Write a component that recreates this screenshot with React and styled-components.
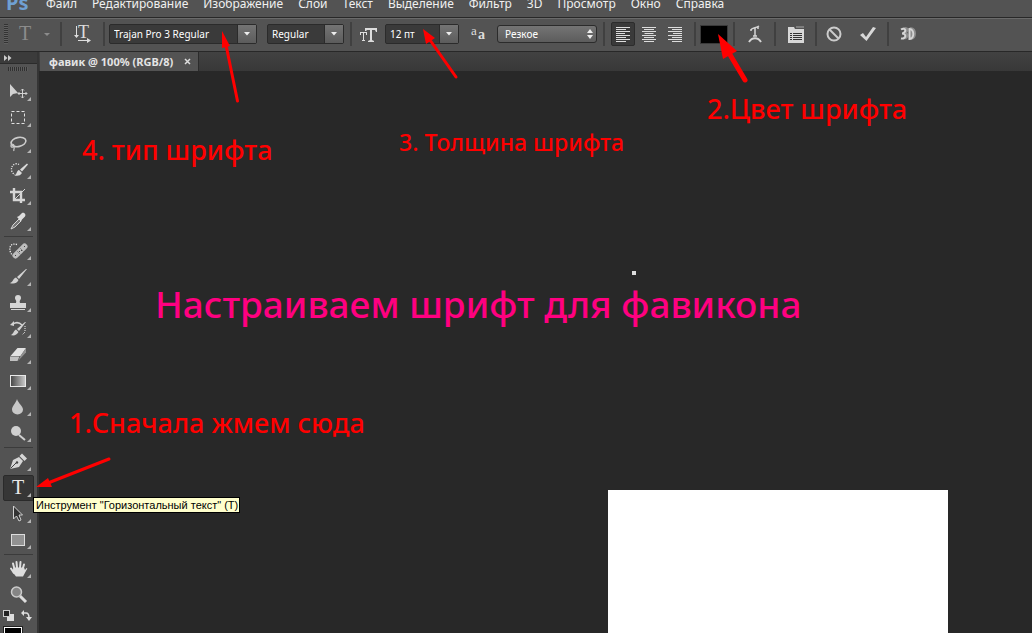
import React from "react";
import styled, { createGlobalStyle, css } from "styled-components";

const GlobalStyle = createGlobalStyle`
  *, *::before, *::after {
    box-sizing: border-box;
  }
  body {
    margin: 0;
    background: #282828;
    font-family: "Noto Sans", "Open Sans", sans-serif;
  }
  button, input, select {
    font-family: inherit;
  }
`;

const Page = styled.div`
  position: relative;
  display: flex;
  flex-direction: column;
  height: 100vh;
  min-width: 940px;
  overflow: hidden;
`;

/* ---------- menu ---------- */
const MenuBar = styled.nav`
  display: flex;
  align-items: flex-end;
  flex: none;
  height: 18px;
  padding-left: 6px;
  background: #535353;
  border-bottom: 1px solid #282828;
  overflow: hidden;
`;
const Logo = styled.span`
  width: 40px;
  padding-bottom: 4px;
  color: #6fa0d2;
  font-size: 20px;
  font-weight: bold;
  line-height: 20px;
`;
const MenuItem = styled.a`
  padding-bottom: 5px;
  margin-right: 15px;
  color: #f0f0f0;
  font-size: 12px;
  line-height: 16px;
  text-decoration: none;
  white-space: nowrap;
`;

/* ---------- options bar ---------- */
const OptionsBar = styled.div`
  display: flex;
  align-items: center;
  flex: none;
  height: 34px;
  padding: 0 0 2px 4px;
  background: #535353;
  border-top: 1px solid #6a6a6a;
  border-bottom: 1px solid #282828;
`;
const Grip = styled.span`
  width: 4px;
  height: 20px;
  background: repeating-linear-gradient(#333 0 1px, #606060 1px 2px);
`;
const Group = styled.div`
  display: flex;
  align-items: center;
  gap: ${({ $gap }) => $gap || 0}px;
  height: 24px;
  padding: 0 ${({ $right }) => $right || 0}px 0 ${({ $left }) => $left || 0}px;
  border-right: 2px solid #404040;

  &:last-child {
    border-right: none;
  }
`;
const IconButton = styled.button`
  display: flex;
  align-items: center;
  justify-content: center;
  width: ${({ $width }) => $width || 24}px;
  height: 24px;
  padding: 0;
  background: none;
  border: 1px solid transparent;
  border-radius: 2px;
  color: #d6d6d6;

  ${({ $active }) =>
    $active &&
    css`
      background: #3a3a3a;
      border-color: #2c2c2c;
    `}
`;
const FieldIcon = styled.label`
  display: flex;
  align-items: center;
  justify-content: center;
  width: ${({ $width }) => $width}px;
  color: #d6d6d6;
`;
const Combo = styled.div`
  display: flex;
  width: ${({ $width }) => $width}px;
  height: 20px;
  border: 1px solid #2b2b2b;
  border-radius: 2px;
  background: #3a3a3a;
`;
const ComboInput = styled.input`
  flex: 1;
  min-width: 0;
  padding: 0 0 0 4px;
  background: none;
  border: none;
  color: #fff;
  font-size: 10px;
`;
const ComboButton = styled.button`
  display: flex;
  align-items: center;
  justify-content: center;
  width: 19px;
  padding: 0;
  background: linear-gradient(#747474, #5c5c5c);
  border: none;
  border-left: 1px solid #2b2b2b;
`;
const SelectBox = styled.div`
  position: relative;
  width: 100px;
  height: 18px;

  svg {
    position: absolute;
    top: 4px;
    right: 4px;
    pointer-events: none;
  }
`;
const Select = styled.select`
  appearance: none;
  display: block;
  width: 100%;
  height: 18px;
  padding: 0 0 0 7px;
  background: linear-gradient(#747474, #5c5c5c);
  border: 1px solid #2b2b2b;
  border-radius: 3px;
  color: #fff;
  font-size: 10px;
`;
const ColorButton = styled.button`
  width: 28px;
  height: 19px;
  padding: 0;
  background: #000;
  border: 1px solid #3a3a3a;
`;

/* ---------- body ---------- */
const Body = styled.div`
  display: flex;
  flex: 1;
  min-height: 0;
`;
const ToolColumn = styled.aside`
  flex: none;
  width: 39px;
  background: #535353;
  border-right: 2px solid #353535;
  overflow: hidden;
`;
const ColumnHead = styled.button`
  display: flex;
  align-items: center;
  width: 100%;
  height: 12px;
  padding: 0 0 0 4px;
  background: #3b3b3b;
  border: none;
  border-bottom: 1px solid #2b2b2b;
`;
const ColumnGrip = styled.div`
  width: 20px;
  height: 4px;
  margin: 3px 0 8px 8px;
  background: repeating-linear-gradient(90deg, #303030 0 1px, #5c5c5c 1px 2px);
`;
const ToolGroup = styled.div`
  padding-left: 3px;

  & + & {
    margin-top: 1px;
    padding-top: 2px;
    background: linear-gradient(#3b3b3b, #3b3b3b) 4px 0 / 29px 1px no-repeat;
  }
`;
const ToolButton = styled.button`
  display: block;
  width: 31px;
  height: 26px;
  padding: 0;
  background: none;
  border: 1px solid transparent;
  border-radius: 2px;

  ${({ $active }) =>
    $active &&
    css`
      background: #363636;
      border-color: #2a2a2a;
    `}

  svg {
    display: block;
  }
`;
const ColorRow = styled.div`
  display: flex;
  gap: 7px;
  padding: 2px 0 6px 3px;
`;
const Mini = styled.button`
  width: 11px;
  height: 11px;
  padding: 0;
  background: none;
  border: none;

  svg {
    display: block;
  }
`;
const Foreground = styled.button`
  display: block;
  width: 18px;
  height: 18px;
  margin-left: 4px;
  background: #000;
  border: 1px solid #fff;
  outline: 1px solid #222;
`;

const Workspace = styled.main`
  display: flex;
  flex-direction: column;
  flex: 1;
  min-width: 0;
`;
const TabStrip = styled.div`
  display: flex;
  flex: none;
  height: 19px;
  padding-left: 1px;
  background: linear-gradient(#424242, #383838);
`;
const Tab = styled.div`
  display: flex;
  align-items: center;
  gap: 11px;
  padding: 0 6px 0 9px;
  background: #535353;
  border-right: 1px solid #2b2b2b;
  color: #e4e4e4;
  font-size: 11px;
  font-weight: bold;
  white-space: nowrap;
`;
const Close = styled.button`
  width: 8px;
  height: 8px;
  padding: 0;
  background: none;
  border: none;

  svg {
    display: block;
  }
`;
const Canvas = styled.div`
  flex: 1;
  background: #282828;
`;

/* everything below floats over the working area */
const Sheet = styled.div`
  position: absolute;
  top: 490px;
  bottom: 0;
  left: 608px;
  width: 340px;
  background: #fff;
`;
const Dot = styled.span`
  position: absolute;
  top: 271px;
  left: 632px;
  width: 4px;
  height: 4px;
  background: #ddd;
`;
const Note = styled.p`
  position: absolute;
  top: ${({ $top }) => $top}px;
  left: ${({ $left }) => $left}px;
  margin: 0;
  color: ${({ $color }) => $color || "#f00"};
  font-size: ${({ $size }) => $size || 27}px;
  font-weight: 500;
  line-height: 1;
  white-space: nowrap;
`;
const Tooltip = styled.div`
  position: absolute;
  top: 497px;
  left: 33px;
  padding: 0 1px 0 2px;
  background: #ffffcd;
  border: 1px solid #000;
  color: #000;
  font-family: "Liberation Sans", sans-serif;
  font-size: 11px;
  line-height: 14px;
  white-space: nowrap;
`;
const Arrows = styled.svg`
  position: absolute;
  top: 0;
  left: 0;
  pointer-events: none;
`;

const Down = () => (
  <svg width="6" height="4" viewBox="0 0 6 4">
    <path d="M0 0h6L3 3.5z" fill="#eee" />
  </svg>
);

const serif = '"Liberation Serif", serif';

const ComboBox = ({ id, label, value, width }) => (
  <Combo $width={width}>
    <ComboInput id={id} aria-label={label} defaultValue={value} />
    <ComboButton aria-label={label}>
      <Down />
    </ComboButton>
  </Combo>
);

const AlignIcon = ({ kind }) => {
  const widths = [14, 10, 14, 9, 14, 10, 14, 10];
  const start = { left: () => 0, center: w => (14 - w) / 2, right: w => 14 - w };
  return (
    <svg width="14" height="15" viewBox="0 0 14 15" fill="#ddd">
      {widths.map((w, i) => (
        <rect key={i} x={start[kind](w)} y={i * 2} width={w} height="1" />
      ))}
    </svg>
  );
};

// tool drawings share a 29x24 box, the icon itself is centred on 14,12
const tools = {
  move: (
    <>
      <path d="M6 4v13l3-3 5-1z" fill="#d2d2d2" />
      <path
        d="M18.500 9v9M14 13.500h9M17 10.500L18.500 9l1.500 1.500M17 16.500l1.500 1.500 1.500-1.500M15.500 12L14 13.500l1.500 1.500M21.500 12l1.500 1.500-1.500 1.500"
        stroke="#d2d2d2"
        fill="none"
      />
    </>
  ),
  marquee: (
    <rect x="7.500" y="5.500" width="13" height="12" fill="none" stroke="#e0e0e0" strokeDasharray="3 2" />
  ),
  lasso: (
    <>
      <ellipse cx="14.500" cy="10" rx="7.500" ry="4.500" transform="rotate(-12 14.500 10)" fill="none" stroke="#ccc" strokeWidth="1.600" />
      <path d="M8 12c-2 1-1 4 1 3s1-3-1-3M10 15c1 2-1 2 0 4" fill="none" stroke="#ccc" strokeWidth="1.200" />
    </>
  ),
  quick: (
    <>
      <path d="M15 6.500a5 5.500 0 1 0-4 10" fill="none" stroke="#e8e8e8" strokeWidth="1.300" strokeDasharray="1.200 1.200" />
      <path d="M24 6.500l-6 7-2-2 7-6zM15 12l3 3c-2 3-4 3-8 2.500 3-.5 2.500-5 5-5.500z" fill="#dadada" />
    </>
  ),
  crop: (
    <>
      <path d="M10 4v12h11M6 8h11v11" fill="none" stroke="#d6d6d6" strokeWidth="2.400" />
      <path d="M11 15l10-10" stroke="#d6d6d6" />
    </>
  ),
  dropper: (
    <>
      <path d="M7 19l2-4 6-6 2 2-6 6z" fill="#777" stroke="#d6d6d6" />
      <path d="M13 7l2-1 3-3c2-1 4.500 1.500 3 3.500l-3 3-1 2z" fill="#ddd" />
    </>
  ),
  heal: (
    <>
      <path d="M13 5.500C4 3 5 13 8 15.500" fill="none" stroke="#eee" strokeWidth="1.300" strokeDasharray="1.200 1.200" />
      <path d="M11.500 16.500l9-9" stroke="#bdbdbd" strokeWidth="6" strokeLinecap="round" />
      <path d="M13 12l4 4M16 9l4 4" stroke="#888" />
      <path d="M15 12.500h1M17 11.500h1M11 16.500h1M20 7.500h1" stroke="#444" />
    </>
  ),
  brush: (
    <path d="M23 4l-8 10-2-2 9-8zM12 12.500l2.500 2.500c-2 4-5 4-9 3 4-.5 3-4.500 6.500-5.500z" fill="#d2d2d2" />
  ),
  stamp: (
    <path d="M14 4a3 3 0 0 1 3 3c0 2-2 2-1 5h6v5H6v-5h6c1-3-1-3-1-5a3 3 0 0 1 3-3zM7 18h14v1H7z" fill="#d6d6d6" />
  ),
  history: (
    <>
      <path d="M22 5l-7 9-2-2 8-7zM12 12.500l2.500 2.500c-2 3-4 4-8 3 3-.5 3-4.500 5.500-5.500z" fill="#d2d2d2" />
      <path d="M9 7c3-2 6-2 9 1" fill="none" stroke="#d2d2d2" strokeWidth="1.500" />
      <path d="M6 8l4-4v5z" fill="#d2d2d2" />
      <path d="M21 9v6l-3 3" fill="none" stroke="#eee" strokeDasharray="1 1" />
    </>
  ),
  eraser: (
    <>
      <path d="M6.500 13l7-8H22l-5.500 8z" fill="#e2e2e2" />
      <path d="M6 13.500h9.500L13.500 18H6z" fill="#c0c0c0" />
      <path d="M16.500 13l5.500-8v4.500l-8 8.500z" fill="#919191" />
    </>
  ),
  gradient: (
    <>
      <defs>
        <linearGradient id="toolFill">
          <stop stopColor="#444" />
          <stop offset="1" stopColor="#ccc" />
        </linearGradient>
      </defs>
      <rect x="6.500" y="6.500" width="15" height="11" fill="url(#toolFill)" stroke="#e8e8e8" />
    </>
  ),
  blur: <path d="M13 4c1 4 6 7 6 10.500a5.500 5 0 0 1-11 0C8 11 12 8 13 4z" fill="#c8c8c8" />,
  dodge: (
    <>
      <circle cx="12" cy="10" r="5" fill="#d0d0d0" />
      <path d="M15 14l6 5" stroke="#d0d0d0" strokeWidth="2" />
    </>
  ),
  pen: (
    <>
      <path d="M6 19l3-9 6-3 4 4-4 6z" fill="#d6d6d6" />
      <path d="M15.500 6l2.500-2.500 5 5L20.500 11z" fill="#d6d6d6" />
      <path d="M6.500 18.500l6-6" stroke="#444" />
      <circle cx="13" cy="12.500" r="1.200" fill="#444" />
    </>
  ),
  type: (
    <text x="14" y="18" textAnchor="middle" fontSize="20" fontFamily={serif} fill="#e8e8e8">
      T
    </text>
  ),
  select: (
    <path d="M9.500 4v13l3-3 2.500 5 2-1-2-5h3.500z" fill="#333" stroke="#d2d2d2" />
  ),
  shape: <rect x="7.500" y="6.500" width="13" height="11" fill="#929292" stroke="#ddd" />,
  hand: (
    <>
      <path d="M10.500 12L9 6.500M13 11l-.5-6M16 11l.5-6M18.500 12.500l1.500-5M10 16l-3-4.500" stroke="#ddd" strokeWidth="2" strokeLinecap="round" />
      <path d="M9.500 10.500h10.500l1 2.500 1.500-2c1 .2 1 1 0 2L19 19.500h-7L8.500 15z" fill="#ddd" />
    </>
  ),
  zoom: (
    <>
      <path d="M16 13l6 6" stroke="#ddd" strokeWidth="3" />
      <circle cx="12.500" cy="9" r="5" fill="#858585" stroke="#ccc" strokeWidth="1.500" />
    </>
  )
};

const groups = [
  [
    ["move", "Перемещение"],
    ["marquee", "Прямоугольная область"],
    ["lasso", "Лассо"],
    ["quick", "Быстрое выделение"],
    ["crop", "Рамка"],
    ["dropper", "Пипетка"]
  ],
  [
    ["heal", "Точечная восстанавливающая кисть"],
    ["brush", "Кисть"],
    ["stamp", "Штамп"],
    ["history", "Архивная кисть"],
    ["eraser", "Ластик"],
    ["gradient", "Градиент"],
    ["blur", "Размытие"],
    ["dodge", "Осветлитель"]
  ],
  [
    ["pen", "Перо"],
    ["type", "Горизонтальный текст"],
    ["select", "Выделение контура"],
    ["shape", "Прямоугольник"]
  ],
  [
    ["hand", "Рука"],
    ["zoom", "Масштаб"]
  ]
];

const menu = [
  "Файл",
  "Редактирование",
  "Изображение",
  "Слои",
  "Текст",
  "Выделение",
  "Фильтр",
  "3D",
  "Просмотр",
  "Окно",
  "Справка"
];

const Options = () => (
  <OptionsBar>
    <Grip />
    <Group>
      <IconButton $width={52} aria-label="Наборы параметров">
        <svg width="32" height="20" viewBox="0 0 32 20" fill="#8c8c8c">
          <text x="1" y="16" fontSize="20" fontFamily={serif}>
            T
          </text>
          <path d="M26 9h6l-3 3z" />
        </svg>
      </IconButton>
    </Group>
    <Group>
      <IconButton $width={41} aria-label="Ориентация текста">
        <svg width="18" height="18" viewBox="0 0 18 18" fill="#ddd">
          <text x="4" y="13" fontSize="18" fontFamily={serif}>
            T
          </text>
          <path d="M2 1h1v9h2l-2.500 3L0 10h2zM4 15h9v-2l4 2.500-4 2.500v-2H4z" />
        </svg>
      </IconButton>
    </Group>
    <Group $left={4} $right={6} $gap={10}>
      <ComboBox id="family" label="Шрифт" value="Trajan Pro 3 Regular" width={148} />
      <ComboBox id="face" label="Начертание" value="Regular" width={77} />
    </Group>
    <Group $right={6}>
      <FieldIcon $width={33} htmlFor="size" aria-label="Кегль">
        <svg width="18" height="17" viewBox="0 0 18 17" fill="#ddd">
          <path d="M0 6h7v3H6V7H4v7h1v1H2v-1h1V7H1v2H0z" />
          <path d="M5 2h12v4h-1l-1-2h-3v10l2 1v1H8v-1l2-1V4H7L6 5H5z" />
        </svg>
      </FieldIcon>
      <ComboBox id="size" label="Кегль" value="12 пт" width={74} />
      <FieldIcon $width={38} htmlFor="smooth" aria-label="Сглаживание">
        <svg width="16" height="14" viewBox="0 0 16 14" fill="#ddd">
          <text x="1" y="8" fontSize="13" fontFamily={serif}>
            a
          </text>
          <text x="8" y="12" fontSize="14" fontWeight="bold" fontFamily={serif}>
            a
          </text>
        </svg>
      </FieldIcon>
      <SelectBox>
        <Select id="smooth" defaultValue="Резкое">
          <option>Резкое</option>
        </Select>
        <svg width="6" height="10" viewBox="0 0 6 10" fill="#eee">
          <path d="M0 4h6L3 0zM0 6h6l-3 4z" />
        </svg>
      </SelectBox>
    </Group>
    <Group $left={6} $right={7} $gap={2}>
      <IconButton $active aria-label="По левому краю">
        <AlignIcon kind="left" />
      </IconButton>
      <IconButton aria-label="По центру">
        <AlignIcon kind="center" />
      </IconButton>
      <IconButton aria-label="По правому краю">
        <AlignIcon kind="right" />
      </IconButton>
    </Group>
    <Group $left={4} $right={5}>
      <ColorButton aria-label="Цвет текста" />
    </Group>
    <Group>
      <IconButton $width={39} aria-label="Деформация">
        <svg width="14" height="18" viewBox="0 0 14 18" fill="none" stroke="#d6d6d6" strokeWidth="1.500">
          <path d="M3 5c1-3 4-1 8-4M7 3v8M5 11h4M3 4v2M10 1v3" />
          <path d="M1 17c3-5 9-5 12 0" strokeWidth="2" />
        </svg>
      </IconButton>
    </Group>
    <Group>
      <IconButton $width={39} aria-label="Панели">
        <svg width="16" height="17" viewBox="0 0 16 17">
          <path d="M0 1h6l1 2h9v14H0z" fill="#d8d8d8" />
          <path d="M8 1h8" stroke="#aaa" />
          <path d="M2 7.500h2M5 7.500h9M2 9.500h2M5 9.500h9M2 11.500h2M5 11.500h9M2 13.500h2M5 13.500h9" stroke="#333" />
        </svg>
      </IconButton>
    </Group>
    <Group $right={2}>
      <IconButton $width={34} aria-label="Отменить">
        <svg width="16" height="16" viewBox="0 0 16 16" fill="none" stroke="#ccc" strokeWidth="2">
          <circle cx="8" cy="8" r="6.500" />
          <path d="M3.500 3.500l9 9" />
        </svg>
      </IconButton>
      <IconButton $width={34} aria-label="Применить">
        <svg width="16" height="16" viewBox="0 0 16 16">
          <path d="M0 9l3-2 3 4 7-10 3 1-9.500 13z" fill="#d8d8d8" />
        </svg>
      </IconButton>
    </Group>
    <Group>
      <IconButton $width={38} aria-label="3D">
        <svg width="16" height="16" viewBox="0 0 16 16" fill="none">
          <path d="M3 3c3-2 5 0 4 2S4 7 4 7c5 0 4 6-1 5M11 2.500v10c5 0 5-10 0-10z" stroke="#8c8c8c" strokeWidth="2.500" />
          <path d="M1 3.500c3-2 5 0 4 2S2 7.500 2 7.500c5 0 4 6-1 5M9.500 3v10c5 0 5-10 0-10z" stroke="#d4d4d4" strokeWidth="2" />
        </svg>
      </IconButton>
    </Group>
  </OptionsBar>
);

const Tools = () => (
  <ToolColumn>
    <ColumnHead aria-label="Свернуть панель">
      <svg width="8" height="6" viewBox="0 0 8 6" fill="#ccc">
        <path d="M0 0l3.500 3L0 6zM4 0l3.500 3L4 6z" />
      </svg>
    </ColumnHead>
    <ColumnGrip />
    {groups.map((group, i) => (
      <ToolGroup key={i}>
        {group.map(([name, label]) => (
          <ToolButton key={name} aria-label={label} $active={name === "type"}>
            <svg width="29" height="24" viewBox="0 0 29 24">
              {tools[name]}
              {name !== "zoom" && <path d="M27 17v4h-4z" fill="#b5b5b5" />}
            </svg>
          </ToolButton>
        ))}
      </ToolGroup>
    ))}
    <ColorRow>
      <Mini aria-label="Цвета по умолчанию">
        <svg width="11" height="11" viewBox="0 0 11 11">
          <rect x="4" y="4" width="7" height="7" fill="#ddd" />
          <rect x=".5" y=".5" width="6" height="6" fill="#222" stroke="#ccc" />
        </svg>
      </Mini>
      <Mini aria-label="Поменять цвета">
        <svg width="11" height="11" viewBox="0 0 11 11">
          <path d="M2 3h3c2 0 3 1 3 5" fill="none" stroke="#ddd" strokeWidth="1.500" />
          <path d="M0 3l3-3v6zM5 7h6l-3 4z" fill="#ddd" />
        </svg>
      </Mini>
    </ColorRow>
    <Foreground aria-label="Основной цвет" />
  </ToolColumn>
);

const App = () => (
  <Page>
    <GlobalStyle />
    <MenuBar>
      <Logo>Ps</Logo>
      {menu.map(item => (
        <MenuItem key={item} href="#">
          {item}
        </MenuItem>
      ))}
    </MenuBar>
    <Options />
    <Body>
      <Tools />
      <Workspace>
        <TabStrip>
          <Tab>
            <span>фавик @ 100% (RGB/8)</span>
            <Close aria-label="Закрыть">
              <svg width="8" height="8" viewBox="0 0 8 8">
                <path d="M1 1l5 5M6 1L1 6" stroke="#ddd" strokeWidth="1.500" />
              </svg>
            </Close>
          </Tab>
        </TabStrip>
        <Canvas />
      </Workspace>
    </Body>

    <Sheet />
    <Dot />
    <Note $top={136} $left={82}>4. тип шрифта</Note>
    <Note $top={131} $left={399} $size={23}>3. Толщина шрифта</Note>
    <Note $top={95} $left={707}>2.Цвет шрифта</Note>
    <Note $top={409} $left={69}>1.Сначала жмем сюда</Note>
    <Note $top={285} $left={155} $size={37} $color="#ff0080">
      Настраиваем шрифт для фавикона
    </Note>
    <Tooltip role="tooltip">Инструмент "Горизонтальный текст" (T)</Tooltip>
    <Arrows width="800" height="520" viewBox="0 0 800 520" fill="#f00" stroke="#f00" strokeLinecap="round">
      <path d="M237.500 101L226 45" strokeWidth="3" />
      <path d="M222 31l8 15-8 2z" stroke="none" />
      <path d="M456 77L430 40" strokeWidth="3" />
      <path d="M423 29l12 9-9 6z" stroke="none" />
      <path d="M745 80L729 53" strokeWidth="5" />
      <path d="M718 34l19 17-14 8z" stroke="none" />
      <path d="M109 459L48 483" strokeWidth="3" />
      <path d="M36 487l12-9 4 9z" stroke="none" />
    </Arrows>
  </Page>
);

export default App;
